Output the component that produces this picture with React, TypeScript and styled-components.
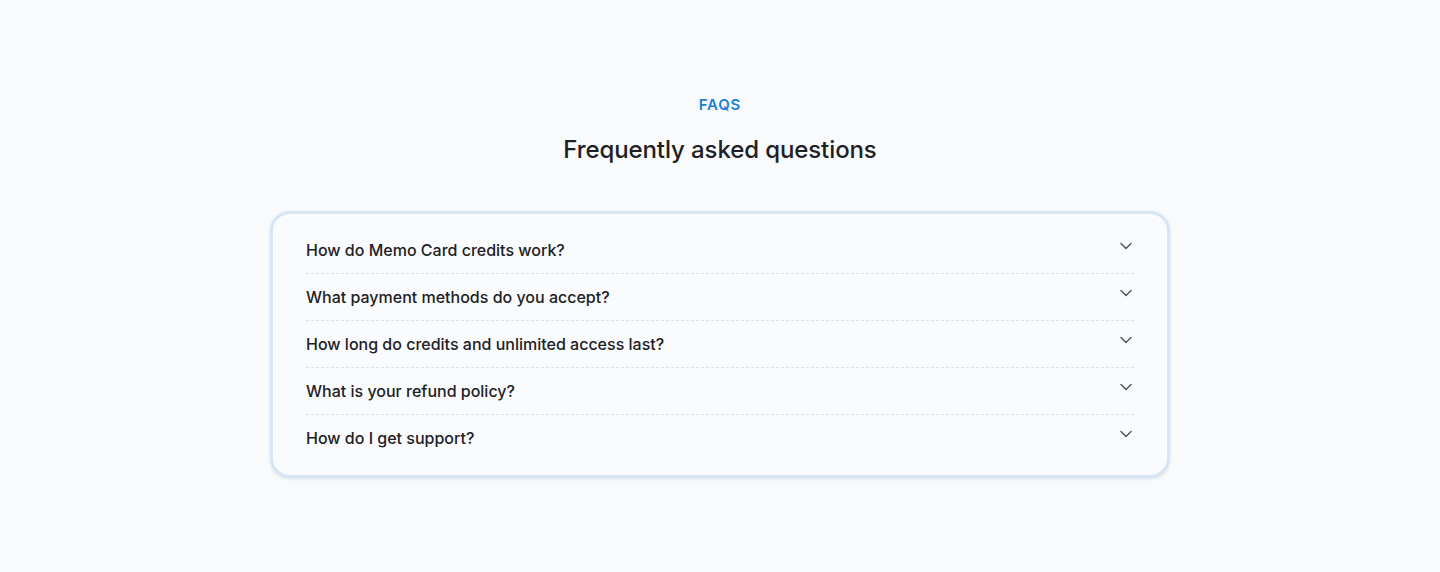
import React from 'react';
import styled, { createGlobalStyle } from 'styled-components';
import { ChevronDown } from 'lucide-react';

const questions = [
  'How do Memo Card credits work?',
  'What payment methods do you accept?',
  'How long do credits and unlimited access last?',
  'What is your refund policy?',
  'How do I get support?',
];

const GlobalStyle = createGlobalStyle`
  html, body {
    margin: 0;
    padding: 0;
    background: #f8fafc;
  }
  body {
    font-family: Inter, 'Noto Sans', sans-serif;
    color: #1d2125;
    -webkit-font-smoothing: antialiased;
  }
`;

const Section = styled.section`
  display: flex;
  flex-direction: column;
  align-items: center;
  padding: 95px 0 96px;
  min-height: 572px;
  box-sizing: border-box;
`;

const Eyebrow = styled.div`
  font-size: 15px;
  line-height: 20px;
  font-weight: 600;
  letter-spacing: 0.8px;
  color: #1a7fd6;
`;

const Heading = styled.h2`
  margin: 19px 0 0;
  font-size: 24px;
  line-height: 32px;
  font-weight: 500;
  letter-spacing: -0.1px;
  color: #1d2125;
`;

const Card = styled.div`
  margin-top: 45px;
  width: 900px;
  box-sizing: border-box;
  padding: 13px 33px 14px;
  background: #f9fbfd;
  border: 3px solid #d7e5f4;
  border-radius: 20px;
  box-shadow: 0 1px 3px rgba(160, 190, 220, 0.35);
  display: flex;
  flex-direction: column;
`;

const Row = styled.button`
  display: flex;
  align-items: flex-start;
  justify-content: space-between;
  width: 100%;
  padding: 11px 0;
  border: none;
  background: transparent;
  font: inherit;
  text-align: left;
  cursor: pointer;
  & + & {
    border-top: 1px dashed #dde2e8;
  }
`;

const Question = styled.span`
  font-size: 16px;
  line-height: 24px;
  font-weight: 500;
  color: #1d2125;
`;

const Icon = styled.span`
  display: flex;
  margin-top: -2px;
  margin-right: -2px;
  color: #55595f;
`;

const App = () => {
  return (
    <>
      <GlobalStyle />
      <Section>
        <Eyebrow>FAQS</Eyebrow>
        <Heading>Frequently asked questions</Heading>
        <Card>
          {questions.map((q) => (
            <Row key={q} type="button">
              <Question>{q}</Question>
              <Icon>
                <ChevronDown size={20} strokeWidth={1.8} />
              </Icon>
            </Row>
          ))}
        </Card>
      </Section>
    </>
  );
};

export default App;
